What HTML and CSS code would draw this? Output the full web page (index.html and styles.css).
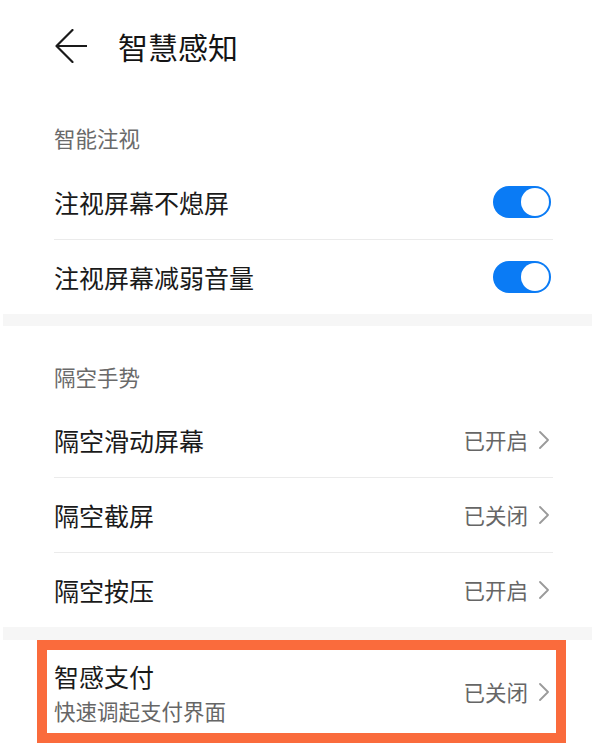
FILE: index.html
```html
<!DOCTYPE html>
<html lang="zh-CN">
<head>
<meta charset="utf-8">
<title>智慧感知</title>
<link rel="stylesheet" href="styles.css">
</head>
<body>
<div class="page">
  <header class="header">
    <svg class="back" width="32" height="34" viewBox="0 0 32 34">
      <path d="M17.5 1 L1.5 17 L17.5 33 M1.5 17 H32" fill="none" stroke="#1a1a1a" stroke-width="2.2" stroke-linecap="round" stroke-linejoin="round"/>
    </svg>
    <h1 class="title">智慧感知</h1>
  </header>

  <section class="group">
    <div class="group-title first">智能注视</div>
    <div class="row">
      <span class="label">注视屏幕不熄屏</span>
      <span class="toggle"></span>
    </div>
    <div class="row last">
      <span class="label">注视屏幕减弱音量</span>
      <span class="toggle"></span>
    </div>
  </section>

  <div class="gap"></div>

  <section class="group">
    <div class="group-title">隔空手势</div>
    <div class="row">
      <span class="label">隔空滑动屏幕</span>
      <span class="value">已开启<svg class="chev" width="10" height="18" viewBox="0 0 10 18"><path d="M1 1 L9 9 L1 17" fill="none" stroke="#9a9a9a" stroke-width="1.8" stroke-linecap="round" stroke-linejoin="round"/></svg></span>
    </div>
    <div class="row">
      <span class="label">隔空截屏</span>
      <span class="value">已关闭<svg class="chev" width="10" height="18" viewBox="0 0 10 18"><path d="M1 1 L9 9 L1 17" fill="none" stroke="#9a9a9a" stroke-width="1.8" stroke-linecap="round" stroke-linejoin="round"/></svg></span>
    </div>
    <div class="row last">
      <span class="label">隔空按压</span>
      <span class="value">已开启<svg class="chev" width="10" height="18" viewBox="0 0 10 18"><path d="M1 1 L9 9 L1 17" fill="none" stroke="#9a9a9a" stroke-width="1.8" stroke-linecap="round" stroke-linejoin="round"/></svg></span>
    </div>
  </section>

  <div class="gap gap2"></div>

  <div class="highlight">
    <div class="texts">
      <div class="label">智感支付</div>
      <div class="sub">快速调起支付界面</div>
    </div>
    <span class="value">已关闭<svg class="chev" width="10" height="18" viewBox="0 0 10 18"><path d="M1 1 L9 9 L1 17" fill="none" stroke="#9a9a9a" stroke-width="1.8" stroke-linecap="round" stroke-linejoin="round"/></svg></span>
  </div>
</div>
</body>
</html>
```

FILE: styles.css
```css
html, body {
  margin: 0;
  padding: 0;
  background: #ffffff;
}

body {
  font-family: "Noto Sans CJK SC", "Noto Sans", sans-serif;
  color: #1a1a1a;
}

.page {
  width: 592px;
}

.header {
  height: 92px;
  display: flex;
  align-items: center;
  padding-left: 55px;
  gap: 31px;
}

.back {
  display: block;
}

.title {
  margin: 0;
  font-size: 30px;
  font-weight: 400;
  line-height: 40px;
  color: #141414;
}

.group-title {
  padding: 37px 0 12px 54px;
  font-size: 21.5px;
  line-height: 28px;
  color: #6a6a6a;
}

.group-title.first {
  padding-top: 32px;
  padding-bottom: 13px;
}

.row {
  height: 74px;
  margin: 0 39px 0 54px;
  display: flex;
  align-items: center;
  justify-content: space-between;
  border-bottom: 1px solid #ebebeb;
}

.row.last {
  border-bottom: none;
}

.label {
  font-size: 25px;
  line-height: 30px;
  color: #1a1a1a;
}

.toggle {
  position: relative;
  width: 58px;
  height: 32px;
  margin-right: 2px;
  border-radius: 16px;
  background: #0a7bf5;
}

.toggle::after {
  content: "";
  position: absolute;
  right: 2px;
  top: 2px;
  width: 28px;
  height: 28px;
  border-radius: 50%;
  background: #ffffff;
}

.value {
  display: flex;
  align-items: center;
  gap: 11px;
  margin-right: 4px;
  font-size: 21.5px;
  line-height: 28px;
  color: #666666;
}

.chev {
  display: block;
}

.gap {
  height: 12px;
  margin-left: 3px;
  background: #f6f6f6;
}

.gap.gap2 {
  height: 13px;
}

.highlight {
  box-sizing: border-box;
  margin-left: 37px;
  width: 529px;
  height: 103px;
  border: 10px solid #fa6b3c;
  padding: 0 3px 0 7px;
  display: flex;
  align-items: center;
  justify-content: space-between;
}

.texts {
  display: flex;
  flex-direction: column;
  padding-top: 2px;
}

.sub {
  margin-top: 7px;
  font-size: 21.5px;
  line-height: 26px;
  color: #666666;
}
```
